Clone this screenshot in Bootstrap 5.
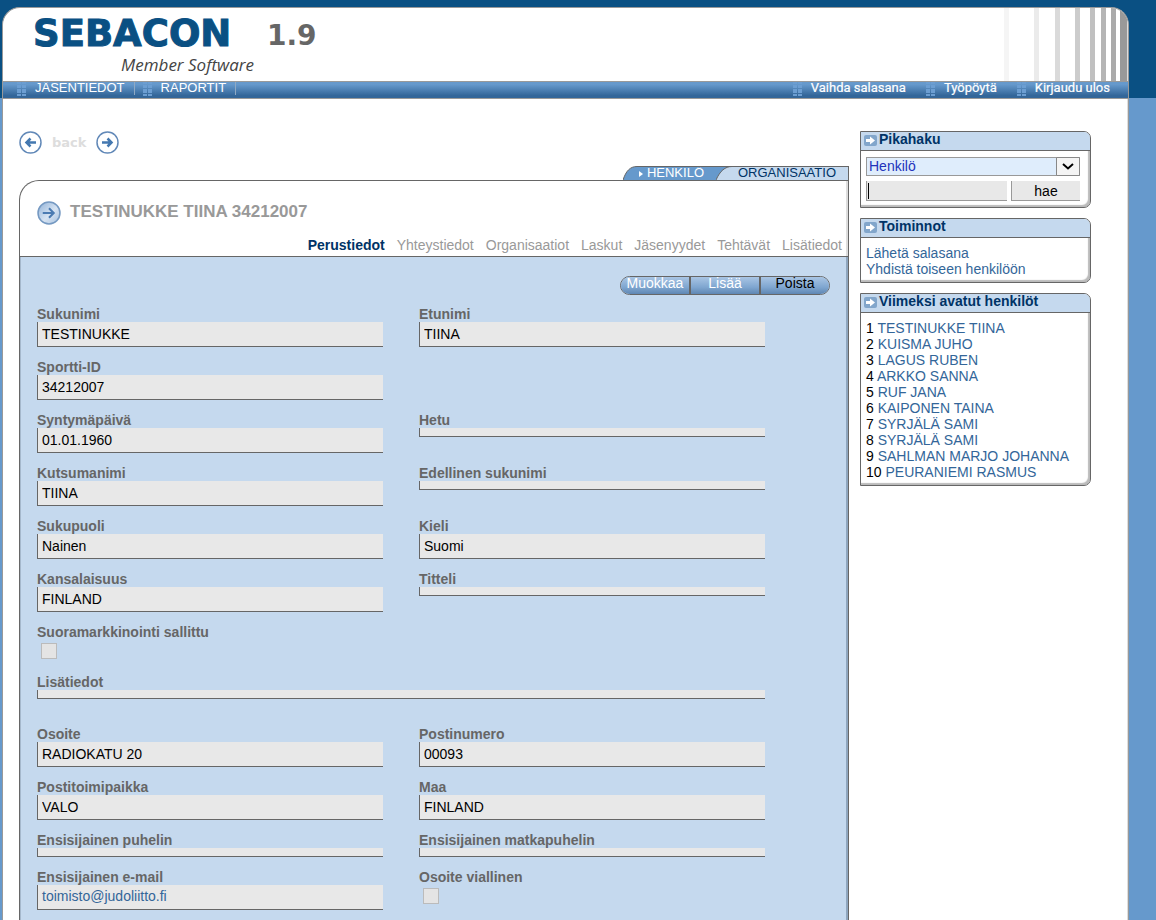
<!DOCTYPE html>
<html lang="fi">
<head>
<meta charset="utf-8">
<meta name="viewport" content="width=device-width, initial-scale=1">
<title>Sebacon Member Software</title>
<link href="https://cdn.jsdelivr.net/npm/bootstrap@5.3.0/dist/css/bootstrap.min.css" rel="stylesheet">
<style>
  body { background: linear-gradient(#0a5083 98px, #6699cc 98px); font: 14px/16px "Liberation Sans", Arial, sans-serif; color: #000; }
  a { text-decoration: none; color: #336699; }
  .shell { margin: 0 27px 0 2px; padding-top: 7px; min-height: 100vh; }
  .sheet { background: #fff; border: 1px solid #999; border-bottom: 0; border-radius: 18px 18px 0 0; overflow: hidden; box-shadow: inset -1px 0 #ddd; }
  .masthead { height: 73px; padding-left: 30px; }
  .brand-block { min-width: 221px; }
  .brand { color: #0a5083; font: bold 37px/42px "DejaVu Sans", sans-serif; margin-top: 5px; -webkit-text-stroke: 1px #0a5083; }
  .release { color: #666; font: bold 28px/36px "DejaVu Sans", sans-serif; margin: 10px 0 0 13px; }
  .tagline { color: #444; font: italic 500 17px/20px "Open Sans", sans-serif; }
  .mainbar { height: 18px; padding: 0 18px 0 14px; border-top: 1px solid #999; border-bottom: 1px solid #999; background: linear-gradient(#6699cc 15%, #336699 85%); overflow: hidden; line-height: 11px; font-size: 13px; }
  .mainbar a { color: #fff; display: flex; gap: 9px; }
  .mainbar .parted { border-right: 1px solid #8fa9c4; padding-right: 9px; margin-right: 8px; height: 13px; }
  .mainbar .aux { font: 400 13px/11px Roboto, sans-serif; -webkit-text-stroke: .2px #fff; }
  .dots { width: 9px; height: 14px; fill: #6c9ed2; flex: none; }
  .workarea { padding: 32px 37px 0 16px; gap: 11px; }
  .backrow { height: 23px; gap: 10px; margin-bottom: 12px; }
  .backrow span { color: #ddd; font: bold 13px/22px "DejaVu Sans", sans-serif; }
  .plain { border: 0; padding: 0; background: none; display: block; line-height: 0; }
  .areatabs { height: 14px; font-size: 13px; line-height: 11px; }
  .areatabs a { height: 14px; border-top: 1px solid #666; overflow: hidden; }
  .tab-on { background: #6699cc; color: #fff; padding: 0 12px 0 0; }
  .tab-off { background: #c5d9ee; color: #003366; padding: 0 12px 0 0; border-right: 1px solid #666; }
  .areatabs svg { display: block; height: 14px; flex: none; }
  .panel { border: 1px solid #666; border-bottom: 0; border-radius: 20px 0 0 0; overflow: hidden; }
  .panel-top { height: 76px; border-bottom: 1px solid #666; box-shadow: inset -2px 0 #ddd; padding: 20px 6px 0 17px; }
  .panel h1 { font-size: 17px; line-height: 22px; font-weight: bold; color: #999; margin: 0; }
  .subtabs { gap: 12px; margin-top: 12px; }
  .subtabs a { color: #999; }
  .subtabs a.current { color: #003366; font-weight: bold; }
  .panel-body { background: #c5d9ee; box-shadow: inset -2px 0 #8fa6be, inset 1px 0 #a5b8cc; padding: 19px 18px 11px 17px; }
  .pills { border: 1px solid #666; border-radius: 10px; overflow: hidden; width: 210px; height: 19px; margin-bottom: 11px; }
  .pills button { flex: 1; border: 0; padding: 0 0 4px; line-height: 13px; color: #fff; background: linear-gradient(#a9c5e4, #7fa6d0 60%, #5f87b3); }
  .pills button + button { border-left: 2px solid #666; }
  .fields { display: grid; grid-template-columns: 1fr 1fr; column-gap: 36px; row-gap: 12px; padding-right: 65px; }
  .fields label { display: block; font-weight: bold; color: #666; line-height: 16px; }
  .fields .wide { grid-column: 1 / -1; padding-bottom: 15px; }
  .fields .solo { grid-column: 1 / -1; }
  .fields .solo > .value { width: calc(50% - 18px); }
  .value { display: block; width: 100%; height: 25px; padding: 0 4px 1px; line-height: 22px; background: #e8e8e8; border: 0 solid #666; border-width: 0 0 1px 1px; border-radius: 0; outline: 0; }
  .value.empty { height: 9px; }
  .tick { appearance: none; display: block; width: 16px; height: 16px; margin: 3px 0 3px 4px; border: 1px solid #bbb; background: #e4e4e4; }
  .side { width: 231px; flex: none; }
  .box { border: 1px solid #666; border-radius: 0 7px 7px 0; overflow: hidden; box-shadow: inset -2px -2px 1px #bbb; }
  .box h2 { margin: 0; height: 19px; padding: 0 3px; font-size: 14px; line-height: 15px; font-weight: bold; color: #003366; background: #c5d9ee; border-bottom: 1px solid #666; display: flex; gap: 2px; }
  .box h2 svg { margin-top: 2px; }
  .box-in { padding: 7px 5px 5px; }
  .finder { padding: 6px 10px 6px 5px; }
  .picker { position: relative; margin-bottom: 5px; }
  .picker select { appearance: none; width: 100%; height: 19px; display: block; padding: 0 2px 2px; line-height: 16px; color: #2233bb; background: #dfedfc; border: 1px solid #999; border-radius: 0; }
  .picker svg { position: absolute; right: 0; top: 0; pointer-events: none; }
  .finder input, .finder button { height: 20px; padding: 0 3px; background: #e8e8e8; border: 1px solid #999; border-width: 0 0 1px 1px; border-radius: 0; outline: 0; line-height: 16px; }
  .finder button { width: 69px; flex: none; }
  .finder input { min-width: 0; flex: 1; caret-color: #000; background: linear-gradient(#000, #000) 1px 2px / 1px 16px no-repeat #e8e8e8; }
</style>
</head>
<body>
<svg class="d-none" xmlns="http://www.w3.org/2000/svg">
  <defs>
    <symbol id="dots" viewBox="0 0 9 14"><path d="M0 0h4v2H0zM5 0h4v2H5zM0 3h4v3H0zM5 3h4v3H5zM0 7h4v4H0zM5 7h4v4H5zM0 12h4v2H0zM5 12h4v2H5z"/></symbol>
    <symbol id="ring" viewBox="0 0 23 23"><circle cx="11.5" cy="11.5" r="10.5" fill="#fff" stroke="#6289b8" stroke-width="1.5"/><path d="M6 11.5h9M11.5 7.5l4 4-4 4" fill="none" stroke="#4478b0" stroke-width="2.5"/></symbol>
    <symbol id="chip" viewBox="0 0 13 13"><rect y="1" width="13" height="11" rx="2" fill="#82a6cb"/><path d="M2 5h4V2.500l5 4-5 4V8H2z" fill="#fff"/></symbol>
  </defs>
</svg>
<div class="shell d-flex flex-column">
  <div class="sheet flex-grow-1 d-flex flex-column">
    <header class="masthead d-flex justify-content-between">
      <div class="d-flex align-items-start">
        <div class="brand-block"><div class="brand">SEBACON</div><div class="tagline text-end">Member Software</div></div>
        <div class="release">1.9</div>
      </div>
      <svg width="124" height="73" aria-hidden="true">
        <path fill="#f5f5f5" d="M0 0h5v73H0z"/><path fill="#ebebeb" d="M30 0h5v73h-5z"/><path fill="#dadada" d="M51 0h5v73h-5z"/><path fill="#ccc" d="M71 0h5v73h-5z"/><path fill="#c0c0c0" d="M86 0h5v73h-5z"/><path fill="#b5b5b5" d="M97 0h5v73h-5z"/><path fill="#aaa" d="M107 0h5v73h-5z"/><path fill="#999" d="M116 0h7v73h-7z"/>
      </svg>
    </header>
    <nav class="mainbar d-flex justify-content-between">
      <div class="d-flex">
        <a class="parted" href="#"><svg class="dots"><use href="#dots"/></svg>JÄSENTIEDOT</a>
        <a class="parted" href="#"><svg class="dots"><use href="#dots"/></svg>RAPORTIT</a>
      </div>
      <div class="aux d-flex" style="column-gap:20px">
        <a href="#"><svg class="dots"><use href="#dots"/></svg>Vaihda salasana</a>
        <a href="#"><svg class="dots"><use href="#dots"/></svg>Työpöytä</a>
        <a href="#"><svg class="dots"><use href="#dots"/></svg>Kirjaudu ulos</a>
      </div>
    </nav>
    <div class="workarea flex-grow-1 d-flex">
      <main class="flex-grow-1 d-flex flex-column">
        <div class="backrow d-flex align-items-center">
          <button class="plain" type="button" aria-label="Edellinen"><svg width="23" height="23"><use href="#ring" transform="matrix(-1 0 0 1 23 0)"/></svg></button>
          <span>back</span>
          <button class="plain" type="button" aria-label="Seuraava"><svg width="23" height="23"><use href="#ring"/></svg></button>
        </div>
        <div class="areatabs d-flex justify-content-end">
          <svg width="14" viewBox="0 0 14 14"><path d="M0 14C3 5 7 .5 14 .5V14z" fill="#6699cc"/><path d="M0 14C3 5 7 .5 14 .5" fill="none" stroke="#666"/></svg>
          <a class="tab-on d-flex" href="#"><svg width="10" viewBox="0 0 10 14"><path d="M2 4l4 3-4 3z" fill="#fff"/></svg>HENKILÖ</a>
          <svg width="22" viewBox="0 0 22 14"><path d="M0 0h22v14H0z" fill="#6699cc"/><path d="M0 14C4 5 9 .5 16 .5h6V14z" fill="#c5d9ee"/><path d="M0 .5h22M0 14C4 5 9 .5 16 .5" fill="none" stroke="#666"/></svg>
          <a class="tab-off" href="#">ORGANISAATIO</a>
        </div>
        <section class="panel flex-grow-1 d-flex flex-column">
          <div class="panel-top">
            <div class="d-flex" style="column-gap:9px">
              <svg width="24" height="24" viewBox="0 0 23 23"><defs><linearGradient id="ball" x1="0" y1="0" x2="1" y2="1"><stop offset="0" stop-color="#8fb1d8"/><stop offset=".55" stop-color="#d6e3f2"/><stop offset="1" stop-color="#a6c0de"/></linearGradient></defs><circle cx="11.500" cy="11.500" r="10.500" fill="url(#ball)" stroke="#7599c2" stroke-width="1.500"/><path d="M5.500 11.500h10M11.500 7l4.500 4.500-4.500 4.500" fill="none" stroke="#4b7bb2" stroke-width="2"/></svg>
              <h1>TESTINUKKE TIINA 34212007</h1>
            </div>
            <nav class="subtabs d-flex justify-content-end">
              <a class="current" href="#">Perustiedot</a><a href="#">Yhteystiedot</a><a href="#">Organisaatiot</a><a href="#">Laskut</a><a href="#">Jäsenyydet</a><a href="#">Tehtävät</a><a href="#">Lisätiedot</a>
            </nav>
          </div>
          <div class="panel-body flex-grow-1">
            <div class="pills d-flex ms-auto">
              <button type="button">Muokkaa</button><button type="button">Lisää</button><button type="button" class="text-black">Poista</button>
            </div>
            <form class="fields">
              <div><label for="f1">Sukunimi</label><input class="value" id="f1" readonly value="TESTINUKKE"></div>
              <div><label for="f2">Etunimi</label><input class="value" id="f2" readonly value="TIINA"></div>
              <div class="solo"><label for="f3">Sportti-ID</label><input class="value" id="f3" readonly value="34212007"></div>
              <div><label for="f4">Syntymäpäivä</label><input class="value" id="f4" readonly value="01.01.1960"></div>
              <div><label for="f5">Hetu</label><input class="value empty" id="f5" readonly></div>
              <div><label for="f6">Kutsumanimi</label><input class="value" id="f6" readonly value="TIINA"></div>
              <div><label for="f7">Edellinen sukunimi</label><input class="value empty" id="f7" readonly></div>
              <div><label for="f8">Sukupuoli</label><input class="value" id="f8" readonly value="Nainen"></div>
              <div><label for="f9">Kieli</label><input class="value" id="f9" readonly value="Suomi"></div>
              <div><label for="f10">Kansalaisuus</label><input class="value" id="f10" readonly value="FINLAND"></div>
              <div><label for="f11">Titteli</label><input class="value empty" id="f11" readonly></div>
              <div class="solo"><label for="f12">Suoramarkkinointi sallittu</label><input class="tick" id="f12" type="checkbox" disabled></div>
              <div class="wide"><label for="f13">Lisätiedot</label><input class="value empty" id="f13" readonly></div>
              <div><label for="f14">Osoite</label><input class="value" id="f14" readonly value="RADIOKATU 20"></div>
              <div><label for="f15">Postinumero</label><input class="value" id="f15" readonly value="00093"></div>
              <div><label for="f16">Postitoimipaikka</label><input class="value" id="f16" readonly value="VALO"></div>
              <div><label for="f17">Maa</label><input class="value" id="f17" readonly value="FINLAND"></div>
              <div><label for="f18">Ensisijainen puhelin</label><input class="value empty" id="f18" readonly></div>
              <div><label for="f19">Ensisijainen matkapuhelin</label><input class="value empty" id="f19" readonly></div>
              <div><label for="f20">Ensisijainen e-mail</label><a class="value" id="f20" href="mailto:toimisto@judoliitto.fi">toimisto@judoliitto.fi</a></div>
              <div><label for="f21">Osoite viallinen</label><input class="tick" id="f21" type="checkbox" disabled></div>
            </form>
          </div>
        </section>
      </main>
      <aside class="side d-flex flex-column" style="row-gap:10px">
        <section class="box">
          <h2><svg width="13" height="13"><use href="#chip"/></svg>Pikahaku</h2>
          <form class="finder">
            <div class="picker">
              <select aria-label="Hakukohde"><option>Henkilö</option></select>
              <svg width="24" height="19" viewBox="0 0 24 19"><path d="M.5.5h23v18H.5z" fill="#f4f4f4" stroke="#888"/><path d="M7 7l5 4.500L17 7" fill="none" stroke="#000" stroke-width="2"/></svg>
            </div>
            <div class="d-flex gap-1"><input type="text" aria-label="Hakusana"><button type="button">hae</button></div>
          </form>
        </section>
        <section class="box">
          <h2><svg width="13" height="13"><use href="#chip"/></svg>Toiminnot</h2>
          <div class="box-in d-flex flex-column"><a href="#">Lähetä salasana</a><a href="#">Yhdistä toiseen henkilöön</a></div>
        </section>
        <section class="box">
          <h2><svg width="13" height="13"><use href="#chip"/></svg>Viimeksi avatut henkilöt</h2>
          <div class="box-in">
            <div>1 <a href="#">TESTINUKKE TIINA</a></div>
            <div>2 <a href="#">KUISMA JUHO</a></div>
            <div>3 <a href="#">LAGUS RUBEN</a></div>
            <div>4 <a href="#">ARKKO SANNA</a></div>
            <div>5 <a href="#">RUF JANA</a></div>
            <div>6 <a href="#">KAIPONEN TAINA</a></div>
            <div>7 <a href="#">SYRJÄLÄ SAMI</a></div>
            <div>8 <a href="#">SYRJÄLÄ SAMI</a></div>
            <div>9 <a href="#">SAHLMAN MARJO JOHANNA</a></div>
            <div>10 <a href="#">PEURANIEMI RASMUS</a></div>
          </div>
        </section>
      </aside>
    </div>
  </div>
</div>
<script src="https://cdn.jsdelivr.net/npm/bootstrap@5.3.0/dist/js/bootstrap.bundle.min.js"></script>
</body>
</html>
